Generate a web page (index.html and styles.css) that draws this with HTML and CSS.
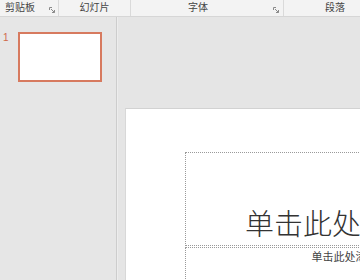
FILE: index.html
```html
<!DOCTYPE html>
<html lang="zh">
<head>
<meta charset="utf-8">
<link rel="stylesheet" href="styles.css">
</head>
<body>
<div class="app">
  <div class="ribbon">
    <div class="group g1"><span class="label">剪贴板</span><span class="launch"><svg width="6" height="6" viewBox="0 0 6 6"><path d="M0.5 0.5H3M0.5 0.5V3" stroke="#8a8a8a" stroke-width="1" fill="none"/><path d="M2 2L5.5 5.5M5.5 3V5.5H3" stroke="#8a8a8a" stroke-width="1" fill="none"/></svg></span></div>
    <div class="group g2"><span class="label">幻灯片</span></div>
    <div class="group g3"><span class="label">字体</span><span class="launch"><svg width="6" height="6" viewBox="0 0 6 6"><path d="M0.5 0.5H3M0.5 0.5V3" stroke="#8a8a8a" stroke-width="1" fill="none"/><path d="M2 2L5.5 5.5M5.5 3V5.5H3" stroke="#8a8a8a" stroke-width="1" fill="none"/></svg></span></div>
    <div class="group g4"><span class="label">段落</span></div>
  </div>
  <div class="work">
    <div class="thumbs">
      <div class="thumb-row">
        <span class="num">1</span>
        <div class="thumb"></div>
      </div>
    </div>
    <div class="editor">
      <div class="slide">
        <div class="ph title-ph"><span class="title">单击此处添加标题</span></div>
        <div class="ph sub-ph"><span class="sub">单击此处添加副标题</span></div>
      </div>
    </div>
  </div>
</div>
</body>
</html>
```

FILE: styles.css
```css
html, body {
  margin: 0;
  padding: 0;
  width: 360px;
  height: 280px;
  overflow: hidden;
  background: #e6e6e6;
  font-family: "Noto Sans CJK SC", "Noto Sans", sans-serif;
}
.app {
  width: 360px;
  height: 280px;
  display: flex;
  flex-direction: column;
}
.ribbon {
  height: 16px;
  flex: none;
  display: flex;
  background: #f3f3f3;
  border-bottom: 1px solid #d6d6d6;
}
.group {
  position: relative;
  display: flex;
  align-items: center;
  justify-content: center;
  height: 16px;
  border-right: 1px solid #dadada;
  box-sizing: border-box;
  flex: none;
}
.label {
  font-size: 10px;
  line-height: 12px;
  color: #444;
  margin-top: -2px;
}
.g1 { width: 59px; justify-content: flex-start; padding-left: 5px; }
.g2 { width: 72px; }
.g3 { width: 153px; padding-right: 18px; }
.g4 { width: 100px; border-right: none; justify-content: flex-start; padding-left: 41px; }
.launch {
  position: absolute;
  right: 3px;
  bottom: 3px;
  width: 6px;
  height: 6px;
  display: flex;
}
.g3 .launch { right: 4px; }
.work {
  flex: 1;
  display: flex;
  min-height: 0;
}
.thumbs {
  width: 117px;
  flex: none;
  border-right: 1px solid #cdcdcd;
  background: #e6e6e6;
  padding-top: 15px;
  box-sizing: border-box;
}
.thumb-row {
  display: flex;
  align-items: flex-start;
}
.num {
  width: 18px;
  padding-left: 3px;
  box-sizing: border-box;
  font-family: "Liberation Sans", sans-serif;
  font-size: 10px;
  line-height: 10px;
  color: #d0694b;
  margin-top: 1px;
}
.thumb {
  width: 80px;
  height: 46px;
  border: 2px solid #d77a5f;
  background: #fff;
}
.editor {
  flex: 1;
  background: #e5e5e5;
  padding: 91px 0 0 7px;
  overflow: hidden;
  border-left: 1px solid #ededed;
}
.slide {
  width: 480px;
  height: 300px;
  background: #fff;
  border-top: 1px solid #d2d2d2;
  border-left: 1px solid #d8d8d8;
  box-sizing: border-box;
  padding: 43px 0 0 59px;
}
.ph {
  width: 352px;
  border: 1px dotted #9a9a9a;
  box-sizing: border-box;
  display: flex;
  justify-content: center;
}
.title-ph {
  height: 94px;
  align-items: flex-end;
  padding-bottom: 6px;
}
.title {
  font-size: 29px;
  line-height: 34px;
  font-weight: 300;
  color: #333;
  white-space: nowrap;
}
.sub-ph {
  margin-top: 1px;
  height: 60px;
  padding-top: 1px;
}
.sub {
  font-size: 11px;
  line-height: 14px;
  color: #444;
  white-space: nowrap;
}
```
